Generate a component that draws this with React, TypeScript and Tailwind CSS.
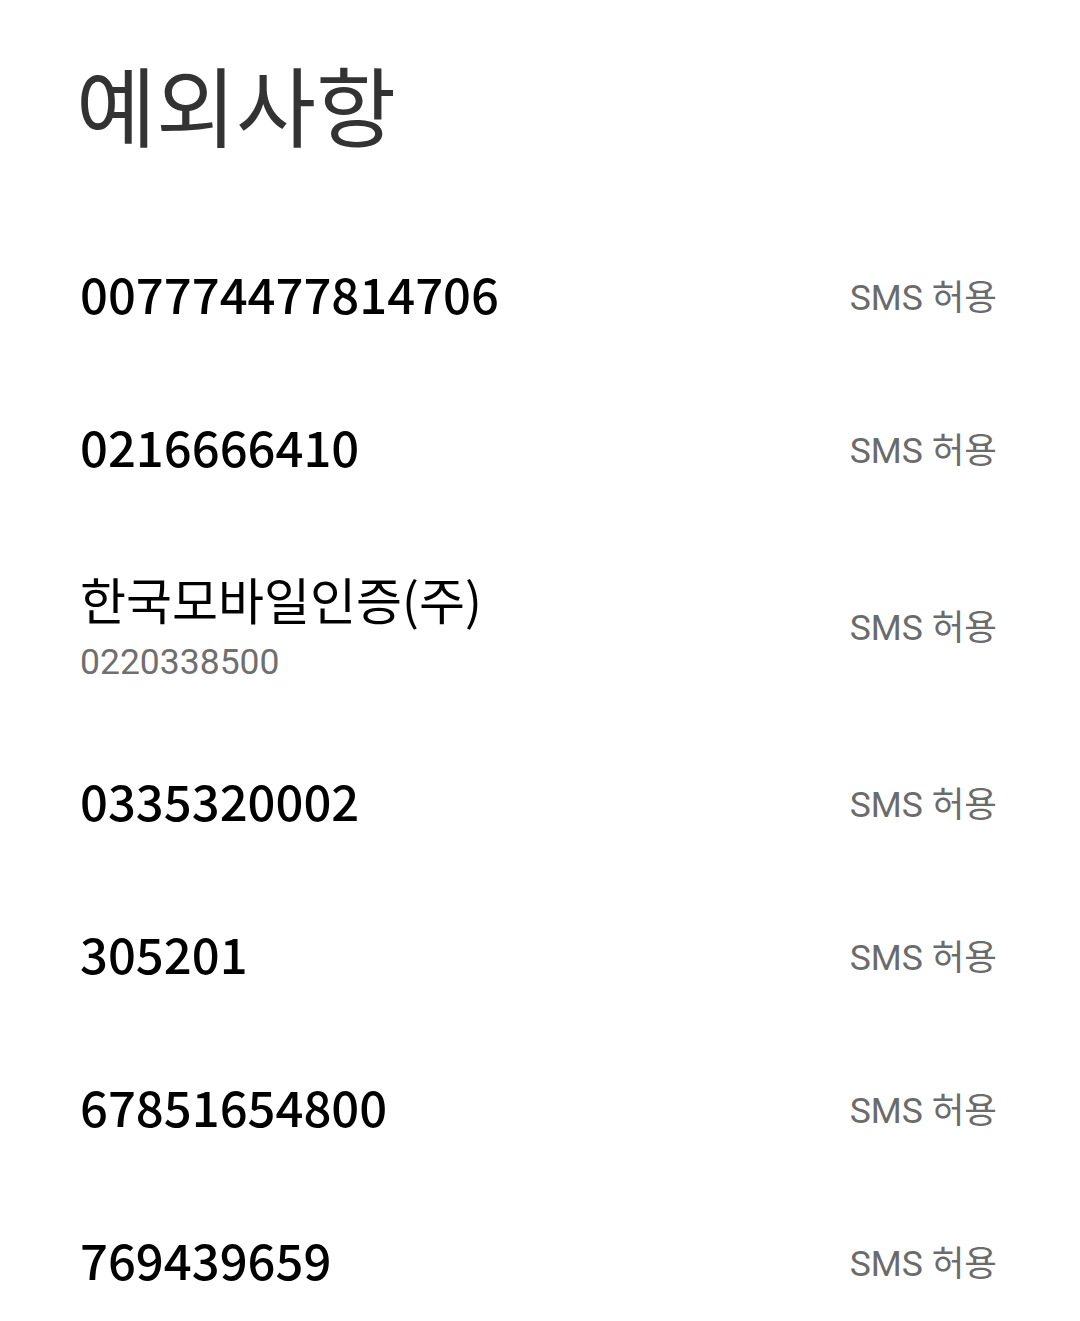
import React from "react";

interface Exception {
  name: string;
  sub?: string;
}

const items: Exception[] = [
  { name: "007774477814706" },
  { name: "0216666410" },
  { name: "한국모바일인증(주)", sub: "0220338500" },
  { name: "0335320002" },
  { name: "305201" },
  { name: "67851654800" },
  { name: "769439659" },
];

const font = { fontFamily: '"Roboto", "Noto Sans CJK KR", sans-serif' };
const cjk = { fontFamily: '"Noto Sans CJK KR", sans-serif' };

export default function App() {
  return (
    <div className="w-[1080px] h-[1321px] overflow-hidden bg-white" style={font}>
      {/* --- HEADER --- */}
      <div className="h-[222px] flex items-center pl-[76px]">
        <h1 className="text-[87px] leading-none font-normal text-[#333333]">예외사항</h1>
      </div>

      {/* --- LIST --- */}
      <ul>
        {items.map((item, idx) =>
          item.sub ? (
            <li key={idx} className="flex items-center justify-between pl-[80px] pr-[83px] h-[201px]">
              <div className="flex flex-col">
                <span style={cjk} className="text-[50px] leading-[67px] font-normal text-black">
                  {item.name}
                </span>
                <span className="text-[35.5px] leading-[60px] text-[#6f6f6f]">{item.sub}</span>
              </div>
              <span className="text-[35.5px] text-[#6b6b6b]">SMS 허용</span>
            </li>
          ) : (
            <li key={idx} className="flex items-center justify-between pl-[80px] pr-[83px] h-[153px]">
              <span style={cjk} className="text-[49px] leading-[56px] pb-[11px] font-medium text-black">
                {item.name}
              </span>
              <span className="text-[35.5px] text-[#6b6b6b]">SMS 허용</span>
            </li>
          )
        )}
      </ul>
    </div>
  );
}
